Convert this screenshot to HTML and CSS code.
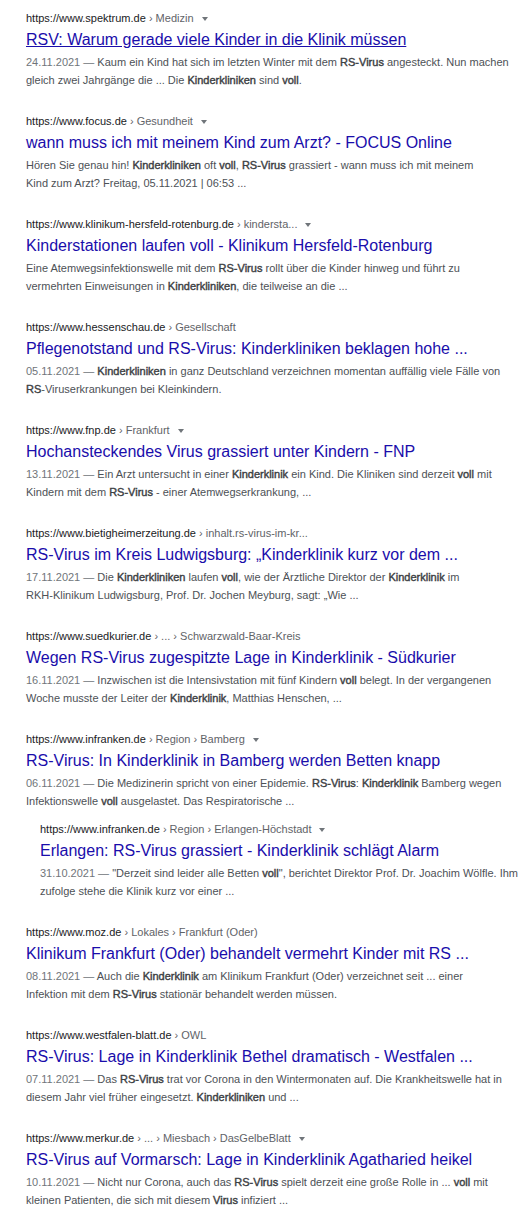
FILE: index.html
```html
<!DOCTYPE html>
<html lang="de">
<head>
<meta charset="utf-8">
<title>Suchergebnisse</title>
<link rel="stylesheet" href="styles.css">
</head>
<body>
<div class="results">

<div class="result">
  <div class="cite"><span class="host">https://www.spektrum.de</span><span class="crumb"> › Medizin</span><span class="caret"></span></div>
  <a class="title hover" href="#">RSV: Warum gerade viele Kinder in die Klinik müssen</a>
  <div class="snippet"><span class="date">24.11.2021 — </span>Kaum ein Kind hat sich im letzten Winter mit dem <b>RS-Virus</b> angesteckt. Nun machen<br>gleich zwei Jahrgänge die ... Die <b>Kinderkliniken</b> sind <b>voll</b>.</div>
</div>

<div class="result">
  <div class="cite"><span class="host">https://www.focus.de</span><span class="crumb"> › Gesundheit</span><span class="caret"></span></div>
  <a class="title" href="#">wann muss ich mit meinem Kind zum Arzt? - FOCUS Online</a>
  <div class="snippet">Hören Sie genau hin! <b>Kinderkliniken</b> oft <b>voll</b>, <b>RS-Virus</b> grassiert - wann muss ich mit meinem<br>Kind zum Arzt? Freitag, 05.11.2021 | 06:53 ...</div>
</div>

<div class="result">
  <div class="cite"><span class="host">https://www.klinikum-hersfeld-rotenburg.de</span><span class="crumb"> › kindersta...</span><span class="caret"></span></div>
  <a class="title" href="#">Kinderstationen laufen voll - Klinikum Hersfeld-Rotenburg</a>
  <div class="snippet">Eine Atemwegsinfektionswelle mit dem <b>RS-Virus</b> rollt über die Kinder hinweg und führt zu<br>vermehrten Einweisungen in <b>Kinderkliniken</b>, die teilweise an die ...</div>
</div>

<div class="result">
  <div class="cite"><span class="host">https://www.hessenschau.de</span><span class="crumb"> › Gesellschaft</span></div>
  <a class="title" href="#">Pflegenotstand und RS-Virus: Kinderkliniken beklagen hohe ...</a>
  <div class="snippet"><span class="date">05.11.2021 — </span><b>Kinderkliniken</b> in ganz Deutschland verzeichnen momentan auffällig viele Fälle von<br><b>RS</b>-Viruserkrankungen bei Kleinkindern.</div>
</div>

<div class="result">
  <div class="cite"><span class="host">https://www.fnp.de</span><span class="crumb"> › Frankfurt</span><span class="caret"></span></div>
  <a class="title" href="#">Hochansteckendes Virus grassiert unter Kindern - FNP</a>
  <div class="snippet"><span class="date">13.11.2021 — </span>Ein Arzt untersucht in einer <b>Kinderklinik</b> ein Kind. Die Kliniken sind derzeit <b>voll</b> mit<br>Kindern mit dem <b>RS-Virus</b> - einer Atemwegserkrankung, ...</div>
</div>

<div class="result">
  <div class="cite"><span class="host">https://www.bietigheimerzeitung.de</span><span class="crumb"> › inhalt.rs-virus-im-kr...</span></div>
  <a class="title" href="#">RS-Virus im Kreis Ludwigsburg: „Kinderklinik kurz vor dem ...</a>
  <div class="snippet"><span class="date">17.11.2021 — </span>Die <b>Kinderkliniken</b> laufen <b>voll</b>, wie der Ärztliche Direktor der <b>Kinderklinik</b> im<br>RKH-Klinikum Ludwigsburg, Prof. Dr. Jochen Meyburg, sagt: „Wie ...</div>
</div>

<div class="result">
  <div class="cite"><span class="host">https://www.suedkurier.de</span><span class="crumb"> › ... › Schwarzwald-Baar-Kreis</span></div>
  <a class="title" href="#">Wegen RS-Virus zugespitzte Lage in Kinderklinik - Südkurier</a>
  <div class="snippet"><span class="date">16.11.2021 — </span>Inzwischen ist die Intensivstation mit fünf Kindern <b>voll</b> belegt. In der vergangenen<br>Woche musste der Leiter der <b>Kinderklinik</b>, Matthias Henschen, ...</div>
</div>

<div class="result has-sub">
  <div class="cite"><span class="host">https://www.infranken.de</span><span class="crumb"> › Region › Bamberg</span><span class="caret"></span></div>
  <a class="title" href="#">RS-Virus: In Kinderklinik in Bamberg werden Betten knapp</a>
  <div class="snippet"><span class="date">06.11.2021 — </span>Die Medizinerin spricht von einer Epidemie. <b>RS-Virus</b>: <b>Kinderklinik</b> Bamberg wegen<br>Infektionswelle <b>voll</b> ausgelastet. Das Respiratorische ...</div>
  <div class="result sub">
    <div class="cite"><span class="host">https://www.infranken.de</span><span class="crumb"> › Region › Erlangen-Höchstadt</span><span class="caret"></span></div>
    <a class="title" href="#">Erlangen: RS-Virus grassiert - Kinderklinik schlägt Alarm</a>
    <div class="snippet"><span class="date">31.10.2021 — </span>"Derzeit sind leider alle Betten <b>voll</b>", berichtet Direktor Prof. Dr. Joachim Wölfle. Ihm<br>zufolge stehe die Klinik kurz vor einer ...</div>
  </div>
</div>

<div class="result">
  <div class="cite"><span class="host">https://www.moz.de</span><span class="crumb"> › Lokales › Frankfurt (Oder)</span></div>
  <a class="title" href="#">Klinikum Frankfurt (Oder) behandelt vermehrt Kinder mit RS ...</a>
  <div class="snippet"><span class="date">08.11.2021 — </span>Auch die <b>Kinderklinik</b> am Klinikum Frankfurt (Oder) verzeichnet seit ... einer<br>Infektion mit dem <b>RS-Virus</b> stationär behandelt werden müssen.</div>
</div>

<div class="result">
  <div class="cite"><span class="host">https://www.westfalen-blatt.de</span><span class="crumb"> › OWL</span></div>
  <a class="title" href="#">RS-Virus: Lage in Kinderklinik Bethel dramatisch - Westfalen ...</a>
  <div class="snippet"><span class="date">07.11.2021 — </span>Das <b>RS-Virus</b> trat vor Corona in den Wintermonaten auf. Die Krankheitswelle hat in<br>diesem Jahr viel früher eingesetzt. <b>Kinderkliniken</b> und ...</div>
</div>

<div class="result">
  <div class="cite"><span class="host">https://www.merkur.de</span><span class="crumb"> › ... › Miesbach › DasGelbeBlatt</span><span class="caret"></span></div>
  <a class="title" href="#">RS-Virus auf Vormarsch: Lage in Kinderklinik Agatharied heikel</a>
  <div class="snippet"><span class="date">10.11.2021 — </span>Nicht nur Corona, auch das <b>RS-Virus</b> spielt derzeit eine große Rolle in ... <b>voll</b> mit<br>kleinen Patienten, die sich mit diesem <b>Virus</b> infiziert ...</div>
</div>

</div>
</body>
</html>
```

FILE: styles.css
```css
html, body {
  margin: 0;
  padding: 0;
  background: #ffffff;
}
body {
  font-family: "Liberation Sans", Arial, sans-serif;
  color: #4d5156;
}
.results {
  display: flex;
  flex-direction: column;
  gap: 25px;
  padding: 11px 0 0 26px;
}
.result {
  display: flex;
  flex-direction: column;
}
.cite {
  font-size: 11px;
  line-height: 14px;
  color: #202124;
  display: flex;
  align-items: center;
  white-space: pre;
}
.crumb {
  color: #5f6368;
}
.caret {
  width: 0;
  height: 0;
  border-left: 3px solid transparent;
  border-right: 3px solid transparent;
  border-top: 4px solid #70757a;
  margin-left: 8px;
  margin-top: 1px;
}
.title {
  font-size: 16px;
  line-height: 22px;
  margin-top: 4px;
  color: #1a0dab;
  text-decoration: none;
  white-space: nowrap;
}
.title.hover {
  text-decoration: underline;
}
.snippet {
  font-size: 11px;
  line-height: 18px;
  margin-top: 2px;
  color: #4d5156;
  white-space: nowrap;
}
.snippet b {
  font-weight: normal;
  color: #3c4043;
  -webkit-text-stroke: 0.4px #3c4043;
}
.date {
  color: #70757a;
}
.sub {
  margin-top: 12px;
  margin-left: 14px;
}
```
